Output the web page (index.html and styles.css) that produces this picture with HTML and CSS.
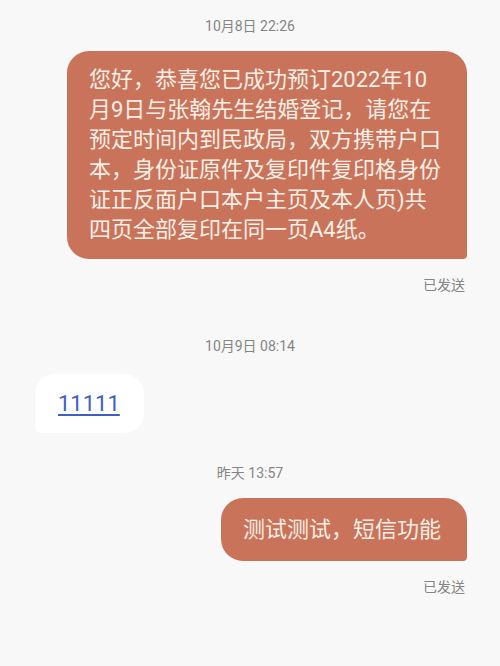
FILE: index.html
```html
<!DOCTYPE html>
<html lang="zh-CN">
<head>
    <meta charset="UTF-8">
    <meta name="viewport" content="width=device-width, initial-scale=1.0">
    <title>短信</title>
    <link rel="stylesheet" href="styles.css">
</head>
<body>

<div class="thread">
    <div class="time first">10月8日 22:26</div>
    <div class="msg out">
        <div class="bubble long"> 您好，恭喜您已成功预订2022年10<br>月9日与张翰先生结婚登记，请您在<br>预定时间内到民政局，双方携带户口<br>本，身份证原件及复印件复印格身份<br>证正反面户口本户主页及本人页)共<br>四页全部复印在同一页A4纸。</div>
    </div>
    <div class="status">已发送</div>

    <div class="time second">10月9日 08:14</div>
    <div class="msg in">
        <div class="bubble"><a href="#">11111</a></div>
    </div>

    <div class="time third">昨天 13:57</div>
    <div class="msg out">
        <div class="bubble">测试测试，短信功能</div>
    </div>
    <div class="status">已发送</div>
</div>

</body>
</html>
```

FILE: styles.css
```css
body {
    margin: 0;
    padding: 0;
    background-color: #f8f8f8;
    font-family: Roboto, "Noto Sans CJK SC", sans-serif;
    width: 500px;
    height: 666px;
    overflow: hidden;
}
.thread {
    display: flex;
    flex-direction: column;
    padding-top: 16px;
}
.time {
    text-align: center;
    font-size: 14px;
    line-height: 20px;
    color: #858585;
}
.time.second {
    margin-top: 41px;
}
.time.third {
    margin-top: 30px;
}
.msg {
    display: flex;
    margin-top: 15px;
}
.msg.out {
    justify-content: flex-end;
    padding-right: 33px;
}
.msg.in {
    justify-content: flex-start;
    padding-left: 35px;
    margin-top: 18px;
}
.bubble {
    font-size: 22px;
    line-height: 30px;
    white-space: nowrap;
}
.out .bubble {
    background-color: #c9745a;
    color: #fcefe7;
    padding: 16.5px 26px 16.5px 22px;
    border-radius: 22px 22px 4px 22px;
}
.out .bubble.long {
    padding-top: 14px;
    padding-bottom: 14px;
}
.in .bubble {
    background-color: #ffffff;
    padding: 14.5px 24px 14.5px 23px;
    border-radius: 20px 20px 20px 6px;
}
.in .bubble a {
    color: #3d5ec6;
    text-decoration: underline;
    text-underline-offset: 3px;
}
.status {
    text-align: right;
    padding-right: 35px;
    margin-top: 16px;
    font-size: 14px;
    line-height: 20px;
    color: #858585;
}
```
